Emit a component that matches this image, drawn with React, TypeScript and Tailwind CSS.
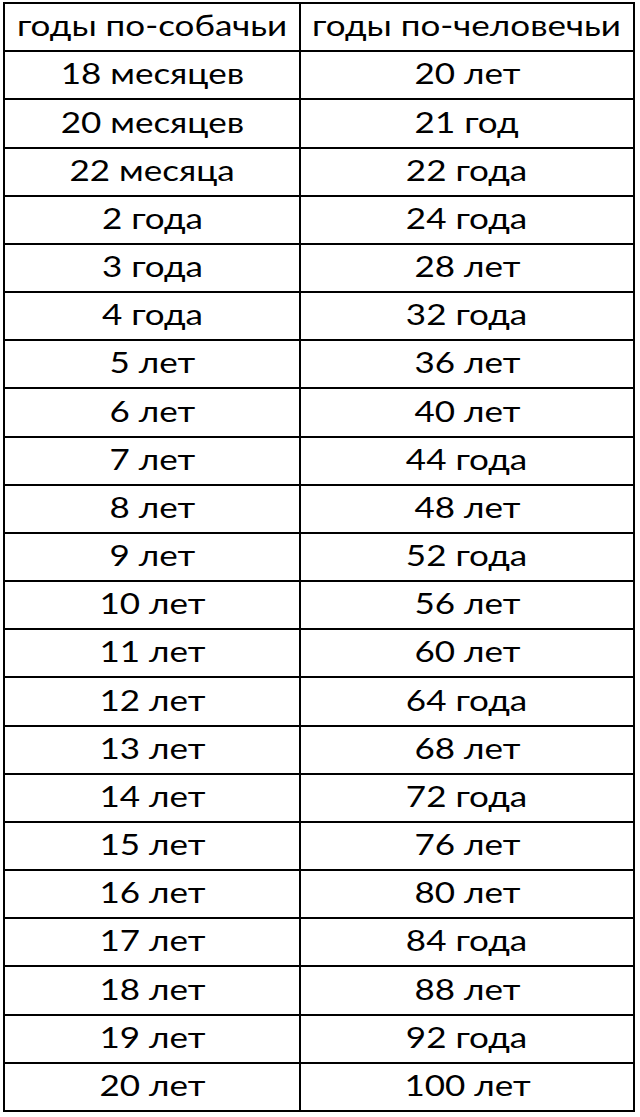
const rows: [string, string][] = [
  ["годы по-собачьи", "годы по-человечьи"],
  ["18 месяцев", "20 лет"],
  ["20 месяцев", "21 год"],
  ["22 месяца", "22 года"],
  ["2 года", "24 года"],
  ["3 года", "28 лет"],
  ["4 года", "32 года"],
  ["5 лет", "36 лет"],
  ["6 лет", "40 лет"],
  ["7 лет", "44 года"],
  ["8 лет", "48 лет"],
  ["9 лет", "52 года"],
  ["10 лет", "56 лет"],
  ["11 лет", "60 лет"],
  ["12 лет", "64 года"],
  ["13 лет", "68 лет"],
  ["14 лет", "72 года"],
  ["15 лет", "76 лет"],
  ["16 лет", "80 лет"],
  ["17 лет", "84 года"],
  ["18 лет", "88 лет"],
  ["19 лет", "92 года"],
  ["20 лет", "100 лет"],
];

function Cell({ text, divider }: { text: string; divider?: boolean }) {
  return (
    <div
      className={`flex items-end justify-center overflow-hidden pb-[11px] ${divider ? "border-r-2 border-black" : ""}`}
    >
      <span className="inline-block scale-x-[1.25] whitespace-nowrap leading-none">{text}</span>
    </div>
  );
}

export default function App() {
  return (
    <div className="h-[1117px] bg-white pl-[3px] pt-[2px] font-[Lato,sans-serif] text-[28px] text-black">
      <div className="flex h-[1110px] w-[632px] flex-col border-2 border-black">
        {rows.map(([dog, human], i) => (
          <div
            key={i}
            className={`grid flex-1 grid-cols-[296px_1fr] ${i > 0 ? "border-t-2 border-black" : ""}`}
          >
            <Cell text={dog} divider />
            <Cell text={human} />
          </div>
        ))}
      </div>
    </div>
  );
}
